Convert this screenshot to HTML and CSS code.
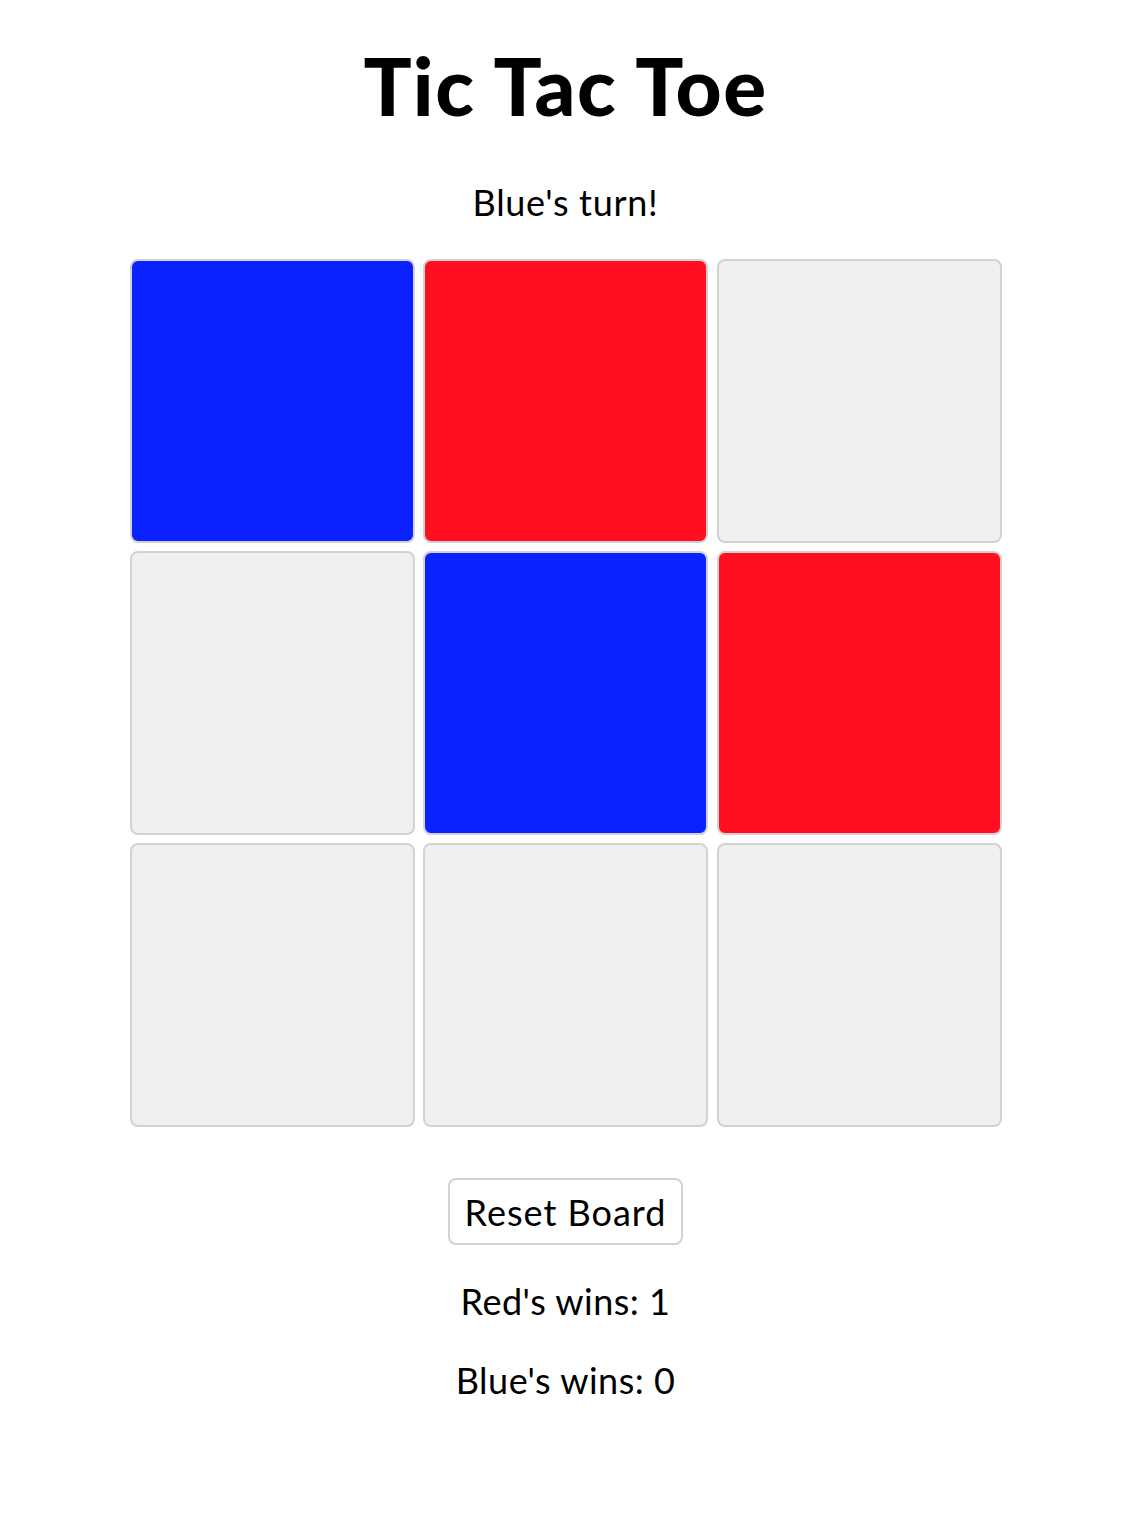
FILE: index.html
```html
<!DOCTYPE html>
<html>
<head>
<meta charset="utf-8">
<title>Tic Tac Toe</title>
<link rel="stylesheet" href="styles.css">
</head>
<body>
<main class="app">
  <h1 class="title">Tic Tac Toe</h1>
  <p class="status">Blue's turn!</p>
  <div class="board">
    <div class="cell blue"></div>
    <div class="cell red"></div>
    <div class="cell"></div>
    <div class="cell"></div>
    <div class="cell blue"></div>
    <div class="cell red"></div>
    <div class="cell"></div>
    <div class="cell"></div>
    <div class="cell"></div>
  </div>
  <button class="reset">Reset Board</button>
  <p class="score">Red's wins: 1</p>
  <p class="score">Blue's wins: 0</p>
</main>
</body>
</html>
```

FILE: styles.css
```css
html, body {
  margin: 0;
  padding: 0;
  background: #fff;
}
body {
  font-family: Lato, "Open Sans", sans-serif;
  color: #000;
}
.app {
  display: flex;
  flex-direction: column;
  align-items: center;
  padding-top: 37px;
  padding-right: 7px;
}
.title {
  margin: 0;
  font-size: 80px;
  font-weight: 900;
  line-height: 96px;
  letter-spacing: 1.5px;
}
.status {
  margin: 47px 0 0;
  font-size: 36px;
  font-weight: 400;
  line-height: 44px;
  letter-spacing: 0.7px;
}
.board {
  margin-top: 35px;
  display: grid;
  grid-template-columns: repeat(3, 285px);
  grid-auto-rows: 284px;
  gap: 8px 8.5px;
}
.cell {
  background: #f0f0f0;
  border: 2px solid #d2d2d2;
  border-radius: 8px;
}
.cell.blue { background: #0a22ff; }
.cell.red { background: #ff0f1f; }
.reset {
  margin-top: 51px;
  font-family: inherit;
  font-size: 36px;
  line-height: 44px;
  letter-spacing: 1px;
  padding: 10px 15px 9px;
  background: #fff;
  color: #000;
  border: 2px solid #d2d2d2;
  border-radius: 8px;
}
.score {
  margin: 34px 0 0;
  font-size: 36px;
  line-height: 44px;
  letter-spacing: 0.5px;
}
.score + .score {
  margin-top: 35px;
}
```
